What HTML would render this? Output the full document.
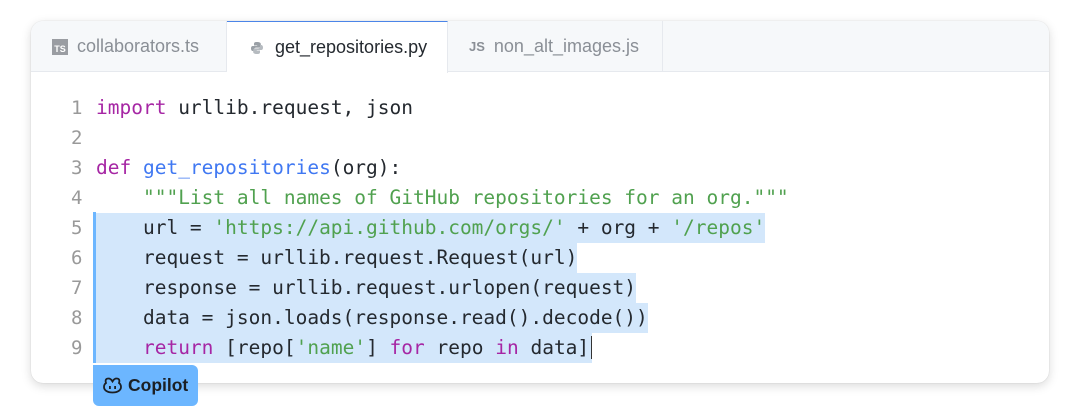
<!DOCTYPE html>
<html><head><meta charset="utf-8"><style>
*{box-sizing:border-box;margin:0;padding:0}
body{width:1075px;height:416px;background:#fff;position:relative;overflow:hidden;font-family:"Liberation Sans",sans-serif}
.card{position:absolute;left:31px;top:21px;width:1018px;height:362px;background:#fff;border-radius:12px;box-shadow:0 3px 10px rgba(0,0,0,.15),0 0 1px rgba(0,0,0,.2);overflow:hidden}
.tabs{position:absolute;left:0;top:0;width:100%;height:51px;background:#f6f8fa;border-bottom:1px solid #e6e9ee}
.tab{position:absolute;top:0;height:51px;display:flex;align-items:center;font-size:18px;color:#8a8f96;border-right:1px solid #e6e9ee}
.tab.active{background:#fff;color:#24292f;height:52px;border-top:1px solid #4b85e8}
.ts{display:inline-block;width:16px;height:16px;background:#9a9da2;color:#fff;font-size:9px;font-weight:bold;text-align:center;line-height:20px;margin-right:9px}
.js{font-weight:bold;font-size:13px;color:#8a8f96;margin-right:9px}
.code{position:absolute;left:0;top:0;font-family:"DejaVu Sans Mono","Liberation Mono",monospace;font-size:19.5px;color:#24292f}
.l{position:absolute;left:65px;height:30px;line-height:30px;white-space:pre}
.n{position:absolute;left:40px;height:30px;line-height:30px;color:#999;font-size:19px}
.sel{background:#d3e7fb}
.k{color:#a626a4}.f{color:#4078f2}.s{color:#50a14f}
.bar{position:absolute;left:62px;top:191px;width:3px;height:151px;background:#6cb6ff}
.badge{position:absolute;left:93px;top:365px;width:105px;height:41px;background:#6cb6ff;border-radius:0 6px 6px 6px;display:flex;align-items:center;padding-left:10px;font-size:17.5px;color:#1b1f24;font-weight:bold}
</style></head><body>
<div class="card">
 <div class="tabs">
  <div class="tab" style="left:0;width:196px;padding-left:21px"><span class="ts">TS</span>collaborators.ts</div>
  <div class="tab active" style="left:196px;width:221px;padding-left:23px"><svg width="14" height="14" viewBox="0 0 14 14" style="margin-right:11px"><path d="M7 1C4 1 4 2 4 3v1.5h3.2V5H3C1.5 5 1 6 1 7.5S1.6 10 3 10h1V8.5C4 7.4 5 6.6 6 6.6h3c1 0 1.8-.8 1.8-1.8V3C10.8 1.8 9.6 1 7 1z" fill="#9aa0a6"/><path d="M7 13c3 0 3-1 3-2V9.5H6.8V9H11c1.5 0 2-1 2-2.5S12.4 4 11 4h-1v1.5C10 6.6 9 7.4 8 7.4H5c-1 0-1.8.8-1.8 1.8V11c0 1.2 1.2 2 3.8 2z" fill="#b6bbc0"/></svg>get_repositories.py</div>
  <div class="tab" style="left:417px;width:215px;padding-left:21px"><span class="js">JS</span>non_alt_images.js</div>
 </div>
 <div class="code">
  <div class="n" style="top:72px">1</div><div class="l" style="top:72px"><span class="k">import</span> urllib.request, json</div>
  <div class="n" style="top:102px">2</div>
  <div class="n" style="top:132px">3</div><div class="l" style="top:132px"><span class="k">def</span> <span class="f">get_repositories</span>(org):</div>
  <div class="n" style="top:162px">4</div><div class="l" style="top:162px">    <span class="s">"""List all names of GitHub repositories for an org."""</span></div>
  <div class="n" style="top:192px">5</div><div class="l sel" style="top:192px">    url = <span class="s">'https://api.github.com/orgs/'</span> + org + <span class="s">'/repos'</span></div>
  <div class="n" style="top:222px">6</div><div class="l sel" style="top:222px">    request = urllib.request.Request(url)</div>
  <div class="n" style="top:252px">7</div><div class="l sel" style="top:252px">    response = urllib.request.urlopen(request)</div>
  <div class="n" style="top:282px">8</div><div class="l sel" style="top:282px">    data = json.loads(response.read().decode())</div>
  <div class="n" style="top:312px">9</div><div class="l sel" style="top:312px">    <span class="k">return</span> [repo[<span class="s">'name'</span>] <span class="k">for</span> repo <span class="k">in</span> data]<span style="border-left:1px solid #333;margin-left:2px"></span></div>
 </div>
 <div class="bar"></div>
</div>
<div class="badge"><svg width="19" height="17" viewBox="0 0 19 17" style="margin-right:6px"><path d="M3 6C2 3 3 1.5 5.5 1.5S8.5 3 9.5 4.5C10.5 3 11 1.5 13.5 1.5S17 3 16 6c1.5 1 2 2 2 4 0 3-3 5.5-8.5 5.5S1 13 1 10c0-2 .5-3 2-4z" fill="none" stroke="#1b1f24" stroke-width="1.8"/><rect x="6" y="9" width="1.8" height="3" fill="#1b1f24"/><rect x="11.2" y="9" width="1.8" height="3" fill="#1b1f24"/></svg>Copilot</div>
</body></html>
